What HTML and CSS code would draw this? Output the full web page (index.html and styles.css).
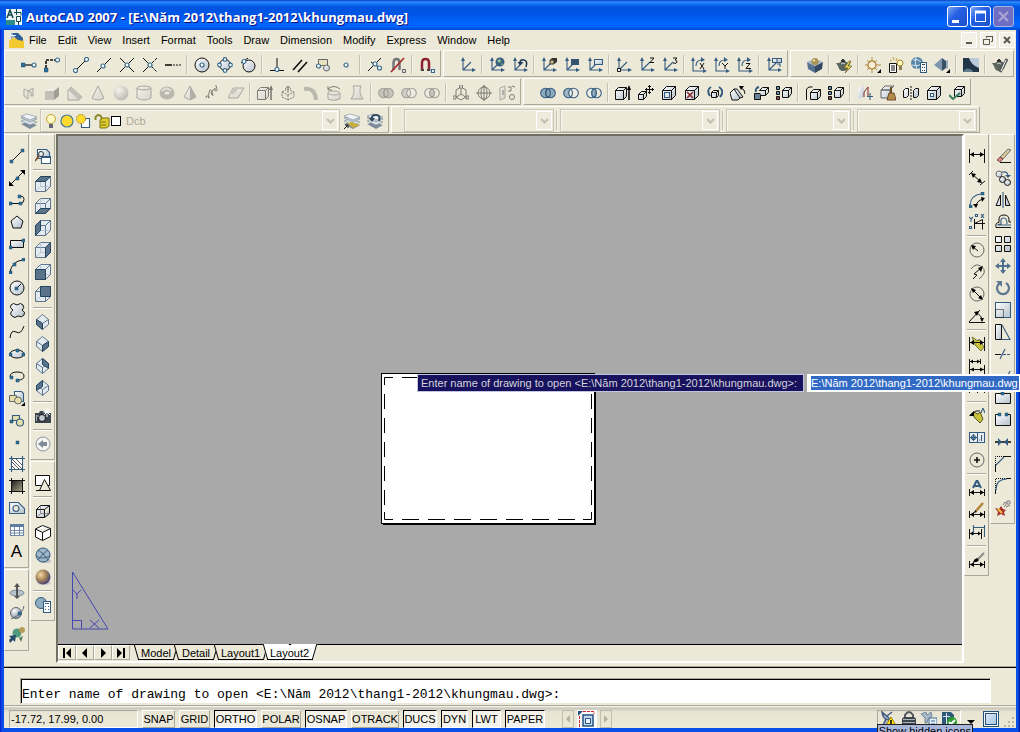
FILE: index.html
```html
<!DOCTYPE html>
<html lang="en">
<head>
  <meta charset="UTF-8">
  <title>AutoCAD 2007</title>
  <link rel="stylesheet" href="styles.css">
</head>
<body>
<svg class="sprite" aria-hidden="true">
  <defs>
    <linearGradient id="sheen" x1="0" y1="0" x2="1" y2="1"><stop offset="0" stop-color="#fff"/><stop offset="1" stop-color="#b4c0cb"/></linearGradient>
    <linearGradient id="dark" x1="0" y1="0" x2="1" y2="1"><stop offset="0" stop-color="#222"/><stop offset="1" stop-color="#a8a184"/></linearGradient>
    <radialGradient id="ball" cx=".35" cy=".3" r=".75"><stop offset="0" stop-color="#fff"/><stop offset="1" stop-color="#7d8c99"/></radialGradient>
    <radialGradient id="gold" cx=".35" cy=".35" r=".7"><stop offset="0" stop-color="#f3d9a8"/><stop offset=".5" stop-color="#a98758"/><stop offset="1" stop-color="#453f78"/></radialGradient>

    <!-- object snap -->
    <symbol id="s-track" viewBox="0 0 16 16"><path class="g2" d="M3 8h8"/><path class="n" d="M0 6h4v4H0z"/><circle class="c" cx="13" cy="8" r="2"/></symbol>
    <symbol id="s-from" viewBox="0 0 16 16"><path class="k2" stroke-dasharray="3 1" d="M2 11V3h10"/><path class="n" d="M0 11h4v4H0z"/><circle class="c" cx="13.500" cy="3" r="2"/></symbol>
    <symbol id="s-end" viewBox="0 0 16 16"><path class="k" d="M3 13L13 3"/><circle class="c" cx="2.500" cy="13.500" r="2"/><circle class="c" cx="13.500" cy="2.500" r="2"/></symbol>
    <symbol id="s-mid" viewBox="0 0 16 16"><path class="k" d="M1 15L15 1"/><circle class="c" cx="7" cy="9" r="2"/></symbol>
    <symbol id="s-int" viewBox="0 0 16 16"><path class="k" d="M1 1l14 14M1 15L15 1"/><circle class="c" cx="8" cy="8" r="2"/></symbol>
    <symbol id="s-app" viewBox="0 0 16 16"><path class="k" d="M1 1l7 7-7 7"/><path class="k" stroke-dasharray="3 1" d="M15 1L8 8l7 7"/><circle class="c" cx="8" cy="8" r="2"/></symbol>
    <symbol id="s-ext" viewBox="0 0 16 16"><path class="k2" d="M0 8h7"/><path class="k" stroke-dasharray="2 1" d="M8 8h8"/></symbol>
    <symbol id="s-cen" viewBox="0 0 16 16"><circle class="k f" cx="8" cy="8" r="7"/><circle class="c" cx="8" cy="8" r="2"/></symbol>
    <symbol id="s-quad" viewBox="0 0 16 16"><circle class="k f" cx="8" cy="8" r="5.500"/><circle class="c" cx="8" cy="2.500" r="1.800"/><circle class="c" cx="8" cy="13.500" r="1.800"/><circle class="c" cx="2.500" cy="8" r="1.800"/><circle class="c" cx="13.500" cy="8" r="1.800"/></symbol>
    <symbol id="s-tan" viewBox="0 0 16 16"><circle class="k f" cx="9" cy="9" r="6"/><path class="k" d="M1 6l7-5"/><circle class="c" cx="4" cy="4.500" r="2"/></symbol>
    <symbol id="s-perp" viewBox="0 0 16 16"><path class="k" d="M8 1v11M1 13.500h14"/><circle class="c" cx="8" cy="12.500" r="2"/></symbol>
    <symbol id="s-par" viewBox="0 0 16 16"><path class="k2" d="M1 13L10 3M6 15l9-10"/></symbol>
    <symbol id="s-ins" viewBox="0 0 16 16"><path class="g" style="fill:#e8e2bd" d="M3.500 2.500h9v6h-9z"/><circle class="g f" cx="11.500" cy="11" r="3"/><circle class="c" cx="3.500" cy="9" r="2"/></symbol>
    <symbol id="s-node" viewBox="0 0 16 16"><circle class="c" cx="8" cy="8" r="2"/></symbol>
    <symbol id="s-near" viewBox="0 0 16 16"><path class="k" d="M1 14L14 1M4 5l9 6"/><circle class="c" cx="8" cy="7" r="2"/><circle class="c" cx="12.500" cy="11" r="2"/></symbol>
    <symbol id="s-none" viewBox="0 0 16 16"><path d="M3.500 13V6q0-4 3-4t3 4v7" fill="none" stroke="#777" stroke-width="2.500"/><path d="M1 15L14 1" stroke="#a32c2c" stroke-width="1.800"/><path class="g f" d="M12.500 12.500h3v3h-3z"/></symbol>
    <symbol id="s-magnet" viewBox="0 0 16 16"><path d="M3 14V6q0-4 3.500-4T10 6v8" fill="none" stroke="#8b2335" stroke-width="2.500"/><path d="M2 13h3M8 13h3" stroke="#444" stroke-width="2"/><path class="c" d="M12.500 12.500h3v3h-3z"/></symbol>

    <!-- ucs -->
    <symbol id="u" viewBox="0 0 16 16"><path class="b" d="M3 2v11h11M3 13l8-8"/><path d="M3 0L1 4h4zM16 13l-4-2v4z" fill="#345c80"/></symbol>
    <symbol id="u-world" viewBox="0 0 16 16"><use href="#u"/><circle cx="11" cy="5" r="4.500" fill="#37617f"/><path d="M8 4q2-3 4-1l-1 3zM12 6l2 1-1 2z" fill="#9bc49a"/></symbol>
    <symbol id="u-prev" viewBox="0 0 16 16"><use href="#u"/><path d="M14 10q2-6-2-7t-4 3" fill="none" stroke="#253b53" stroke-width="1.600"/><path d="M5.500 5h5L8 8.500z" fill="#253b53"/></symbol>
    <symbol id="u-face" viewBox="0 0 16 16"><use href="#u"/><path d="M9 3h4v4H9z" fill="#c9bd8a" stroke="#111" stroke-width=".8"/><path d="M9 3l2-2h5l-3 2zM16 1v4l-3 2V3z" fill="#333"/></symbol>
    <symbol id="u-obj" viewBox="0 0 16 16"><use href="#u"/><path d="M7 2h8v6H7z" fill="#33536f"/></symbol>
    <symbol id="u-view" viewBox="0 0 16 16"><use href="#u"/><path class="b f" d="M7.500 2.500h8v5h-8z"/></symbol>
    <symbol id="u-org" viewBox="0 0 16 16"><use href="#u"/><path class="k" style="fill:#fff" d="M1.500 11.500h3v3h-3z"/></symbol>
    <symbol id="u-z" viewBox="0 0 16 16"><use href="#u"/><path class="k" d="M11 1h4l-4 4.500h4"/></symbol>
    <symbol id="u-3" viewBox="0 0 16 16"><use href="#u"/><path class="k" d="M11 1h4l-2 2q2 0 2 2t-4 1"/></symbol>
    <symbol id="u-rot" viewBox="0 0 16 16"><path class="b" d="M2 2v12h12M5 9q0-6 6-6"/><path d="M2 0L0 4h4zM16 14l-4-2v4zM14 3l-4-3v5z" fill="#345c80"/></symbol>
    <symbol id="u-rx" viewBox="0 0 16 16"><use href="#u-rot"/><path class="k" d="M9 6l4 6M13 6l-4 6"/></symbol>
    <symbol id="u-ry" viewBox="0 0 16 16"><use href="#u-rot"/><path class="k" d="M8 6l3 3 3-3M11 9v3"/></symbol>
    <symbol id="u-rz" viewBox="0 0 16 16"><use href="#u-rot"/><path class="k" d="M9 6.500h4l-4 5h5"/></symbol>
    <symbol id="u-apply" viewBox="0 0 16 16"><use href="#u"/><path class="b f" d="M6.500 1.500h9v4h-9zM11 1v4"/><path class="b" d="M11 7h3v3"/></symbol>

    <!-- render -->
    <symbol id="r-hide" viewBox="0 0 16 16"><path d="M0 5l8 4v7l-7-4z" fill="#567291"/><path d="M16 5l-8 4v7l7-4z" fill="#33475f"/><path d="M0 5l8-3 8 3-8 4z" fill="#9fb3c6"/><circle cx="8" cy="4.500" r="3.500" fill="#a8924e"/><circle cx="7" cy="3.500" r="1.200" fill="#e8d8a0"/></symbol>
    <symbol id="r-pot" viewBox="0 0 16 16"><path d="M3 6q5-4 9 0l3-1-2 4q-1 5-6 5-4 0-5-5L0 6z" fill="#59675f"/><path d="M5 4h4M7 2v2" stroke="#333" stroke-width="2"/><path d="M5 7q2-2 4 0" stroke="#cfd8d0" fill="none"/></symbol>
    <symbol id="r-flash" viewBox="0 0 16 16"><use href="#r-pot"/><path d="M13 4l-5 7h4l-3 5 7-7h-4l3-5z" fill="#e9d35c" stroke="#534a13" stroke-width=".6"/></symbol>
    <symbol id="r-set" viewBox="0 0 16 16"><use href="#r-pot"/><path d="M15 2L8 15" stroke="#555" stroke-width="3"/><path d="M14 3L9 14" stroke="#fff"/></symbol>
    <symbol id="r-light" viewBox="0 0 16 16"><circle cx="7" cy="8" r="4" fill="#f6efd6" stroke="#b68d45" stroke-width="1.500"/><path d="M7 0v4M7 12v4M0 8h3M11 8h5M2 3l3 3M12 3L9 6M2 13l3-3M12 13l-3-3" stroke="#b68d45"/><path d="M16 12v4h-4z"/></symbol>
    <symbol id="r-lights" viewBox="0 0 16 16"><path class="k" style="fill:#fff" d="M1.500 6.500h7v9h-7z"/><path class="k" d="M3 9h4M3 11h4M3 13h4"/><path d="M2 3l2 1M5 0l1 3M9 1L8 4" stroke="#caa43b"/><circle cx="12" cy="6" r="3" fill="#fff6b6" stroke="#a28a3a"/><path d="M11 9h3v4h-3z" fill="#8b8153"/></symbol>
    <symbol id="r-mat" viewBox="0 0 16 16"><circle cx="6" cy="6" r="6" fill="#5685a8"/><path d="M2 3q4-2 8 2M1 8q5 2 10-1M5 0q-2 6 1 12" stroke="#d7e7ef" fill="none"/><path class="b" style="fill:#fff" d="M9.500 5.500h6v10h-6z"/><path d="M11 7.500h3M11 10.500h1M13 10.500h1M11 13.500h1M13 13.500h1" stroke="#345"/></symbol>
    <symbol id="r-map" viewBox="0 0 16 16"><path d="M8 1v13L0 8z" fill="#7d95ad"/><path d="M8 1l4 3v7l-4 3z" fill="#395069"/><path d="M12 4l2-1v9l-2-1z" fill="#9ab"/><path d="M16 12v4h-4z"/></symbol>
    <symbol id="r-env" viewBox="0 0 16 16"><path d="M0 1h16v14H0z" fill="#b9cbd8"/><path d="M0 1h6q2 7 10 10v4H0z" fill="#223547"/><path d="M0 15q3-6 9-2l1 2z" fill="#607a90"/></symbol>

    <!-- solids -->
    <symbol id="box" viewBox="0 0 16 16"><path class="k f" d="M1.500 5.500h9v9h-9zM1.500 5.500l4-4h9l-4 4zM14.500 1.500v9l-4 4v-9z"/></symbol>
    <symbol id="o-poly" viewBox="0 0 16 16"><path class="g f" d="M3 4l4 2v8l-4-3zM7 6l5-3v8h-2V7z"/></symbol>
    <symbol id="o-box" viewBox="0 0 16 16"><path d="M1 6h9v9H1z" fill="#999"/><path d="M1 6l5-4h9l-5 4z" fill="#eee"/><path d="M10 6l5-4v9l-5 4z" fill="#555"/></symbol>
    <symbol id="o-wedge" viewBox="0 0 16 16"><path class="g f" d="M1 5l3-3 11 10-3 3H1z"/><path d="M1 5l3-3 11 10-3 3z" fill="#999"/></symbol>
    <symbol id="o-cone" viewBox="0 0 16 16"><path class="g f" d="M8 1l6 12q-6 4-12 0z"/></symbol>
    <symbol id="o-ball" viewBox="0 0 16 16"><circle cx="8" cy="8" r="7.500" fill="url(#ball)"/></symbol>
    <symbol id="o-cyl" viewBox="0 0 16 16"><path class="g f" d="M1 3v10q7 4 14 0V3z"/><ellipse class="g f" cx="8" cy="3" rx="7" ry="2"/></symbol>
    <symbol id="o-tor" viewBox="0 0 16 16"><ellipse cx="8" cy="8" rx="5" ry="4" fill="none" stroke="#888" stroke-width="5"/><path d="M3 6q5-5 9 0" stroke="#ddd" fill="none" stroke-width="2"/></symbol>
    <symbol id="o-pyr" viewBox="0 0 16 16"><path class="g f" d="M8 1l6 11-6 3-6-3z"/><path d="M8 1l6 11-6 3z" fill="#777"/></symbol>
    <symbol id="o-helix" viewBox="0 0 16 16"><path class="k" d="M1 13q0-3 2-2t1 2 0-5 3-1 0 3 1-5 2-1 1 2 0-5 5-2"/></symbol>
    <symbol id="o-plane" viewBox="0 0 16 16"><path class="g f" d="M5 3h11l-6 10H0z"/><path d="M5 3h6L6 9H2z" fill="#aaa"/></symbol>
    <symbol id="e-ext" viewBox="0 0 16 16"><path class="k f" d="M.5 5.500h8v9h-8zM.5 5.500l3-3h8l-3 3zM11.500 2.500v9l-3 3"/><path class="k2" d="M14 15V3"/><path d="M14 0l-2 5h4z"/></symbol>
    <symbol id="o-press" viewBox="0 0 16 16"><path class="k" stroke-dasharray="2 1" d="M2 7l6-3 6 3v5l-6 3-6-3zM2 7l6 3 6-3M8 10v5"/><path class="k" d="M8 8V1M5 4l3-3 3 3"/></symbol>
    <symbol id="o-sweep" viewBox="0 0 16 16"><path d="M1 4q11-2 12 11" fill="none" stroke="#888" stroke-width="4"/></symbol>
    <symbol id="o-rev" viewBox="0 0 16 16"><path class="g f" d="M2 8v6q6 3 12 0V8z"/><ellipse class="g f" cx="8" cy="8" rx="6" ry="2"/><path class="k" d="M2 4q6-5 12 0M2 1v4h4"/></symbol>
    <symbol id="o-loft" viewBox="0 0 16 16"><path class="g f" d="M4 1h8q-3 6 2 13H2Q7 7 4 1z"/></symbol>
    <symbol id="union" viewBox="0 0 16 16"><circle class="b" style="fill:#8da8bb" cx="5.500" cy="8" r="4.800"/><circle class="b" style="fill:#8da8bb" cx="10.500" cy="8" r="4.800"/><ellipse class="b" cx="8" cy="8" rx="2.200" ry="4"/></symbol>
    <symbol id="subtract" viewBox="0 0 16 16"><circle class="b" style="fill:#9fb5c4" cx="5.500" cy="8" r="4.800"/><circle class="b" style="fill:#f0efe6" cx="10.500" cy="8" r="4.800"/><path class="b" d="M8 4q3 4 0 8"/></symbol>
    <symbol id="intersect" viewBox="0 0 16 16"><circle class="b" style="fill:#f0efe6" cx="5.500" cy="8" r="4.800"/><circle class="b" cx="10.500" cy="8" r="4.800"/><ellipse class="b" style="fill:#8da8bb" cx="8" cy="8" rx="2.200" ry="4"/></symbol>
    <symbol id="o-move" viewBox="0 0 16 16"><path class="k" d="M8 1v8l-6 4M8 9l6 4M3 5l5-3 5 3v7l-5 3-5-3z"/><path class="k f" d="M0 11h3v3H0zM13 11h3v3h-3zM6.500 0h3v3h-3z"/></symbol>
    <symbol id="o-orbit" viewBox="0 0 16 16"><circle class="k" cx="8" cy="8" r="6"/><ellipse class="k" cx="8" cy="8" rx="3" ry="7"/><path class="k" d="M0 8h16M8 0v16"/></symbol>
    <symbol id="o-align" viewBox="0 0 16 16"><path class="g f" d="M1 3l5-2v12l-5 2z"/><path class="k" d="M9 2h3v4M9 6h3M13 1l3 1M4 5v5"/><circle class="k" cx="13" cy="12" r="2.500"/></symbol>

    <!-- solid editing -->
    <symbol id="e-move" viewBox="0 0 16 16"><path class="k f" d="M.5 9.500h5v5h-5zM.5 9.500l3-3h5l-3 3zM8.500 6.500v5l-3 3"/><path class="k" d="M11.500 0v9M7 4.500h9M10 1.500h3M10 7.500h3M8.500 3v3M14.500 3v3"/></symbol>
    <symbol id="e-offset" viewBox="0 0 16 16"><use href="#box"/><path class="b" style="fill:#dfe7ed" d="M3.500 7.500h5v5h-5z"/></symbol>
    <symbol id="e-del" viewBox="0 0 16 16"><use href="#box"/><path d="M3 7l6 6M9 7l-6 6" stroke="#8d2a2d" stroke-width="1.600"/></symbol>
    <symbol id="e-rot" viewBox="0 0 16 16"><path class="k f" d="M4.500 7.500h5v5h-5zM4.500 7.500l2-2h5l-2 2zM11.500 5.500v5l-2 2"/><path class="b" d="M3 11Q-1 5 4 2M13 12q5-6-1-10" style="stroke-width:2"/></symbol>
    <symbol id="e-taper" viewBox="0 0 16 16"><path class="k f" d="M0 8l4-4 6 9-2 2H2zM4 4h3l6 8-3 1"/><path class="k" d="M15 9q0-5-4-6"/><path d="M9 1h5l-3 4z"/></symbol>
    <symbol id="e-color" viewBox="0 0 16 16"><path class="k" style="fill:#6b8499" d="M1.500 8.500h6v6h-6z"/><path class="k f" d="M6.500 5.500l3-3h6l-3 3zM6.500 5.500h6v5H8M15.500 2.500v5l-3 3"/><path class="b" style="stroke-width:2" d="M3 7q-1-4 3-5"/></symbol>
    <symbol id="e-copy" viewBox="0 0 16 16"><path class="k f" d="M6.500 5.500h6v7h-6zM6.500 5.500l3-3h6l-3 3zM15.500 2.500v6l-3 4"/><path class="k" style="fill:#6f9ab8" d="M.5 1.500h3v3h-3zM.5 6.500h3v3h-3z"/><path class="k" style="fill:#a5474a" d="M.5 11.500h3v3h-3z"/></symbol>
    <symbol id="e-cedge" viewBox="0 0 16 16"><path class="k f" d="M5.500 7.500h7v7h-7zM5.500 7.500l3-3h7l-3 3zM15.500 4.500v7l-3 3"/><path class="k" d="M1.500 15V4q2-3 6-2"/></symbol>
    <symbol id="e-imp" viewBox="0 0 16 16"><path class="f" d="M1 3l6-2v11l-6 2z"/><path class="k" style="stroke:#7d2a2d" d="M7 12V7l4-5v9"/><path class="b" d="M13 8v7M10 11.500h6"/></symbol>
    <symbol id="e-clean" viewBox="0 0 16 16"><path class="g f" d="M1 5h9v8H1zM1 5l4-4h9l-4 4z"/><path d="M11 2v6" stroke="#6b4a22" stroke-width="2"/><path d="M9 8h5l2 7H7z" fill="#b58a4a" stroke="#6b4a22"/></symbol>
    <symbol id="e-sep" viewBox="0 0 16 16"><path class="k f" d="M.5 5.500l2-2h3v7l-2 2h-3zM10.500 5.500l2-2h3v7l-2 2h-3z"/><path class="k" stroke-dasharray="2 1" d="M8 1v14"/></symbol>
    <symbol id="e-shell" viewBox="0 0 16 16"><use href="#box"/><path class="b" style="fill:#fff" d="M4.500 8.500h3v3h-3z"/></symbol>
    <symbol id="e-check" viewBox="0 0 16 16"><path class="k f" d="M5.500 4.500h7v7h-7zM5.500 4.500l3-3h7l-3 3zM15.500 1.500v7l-3 3"/><path d="M0 10l4 4 7-6" fill="none" stroke="#3c7a61" stroke-width="2"/></symbol>

    <!-- layers -->
    <symbol id="layers" viewBox="0 0 16 16"><path d="M0 11l6-2 10 3-7 4z" fill="#7c8b9a"/><path d="M0 8l6-2 10 3-7 3z" fill="#dde4ea" stroke="#7c8b9a" stroke-width=".6"/><path d="M0 5l6-2 10 3-7 3z" fill="#c3cdd6" stroke="#7c8b9a" stroke-width=".6"/><path d="M0 3l6-2 10 3-7 3z" fill="#f0f3f6" stroke="#7c8b9a" stroke-width=".6"/></symbol>
    <symbol id="l-cur" viewBox="0 0 16 16"><use href="#layers"/><path d="M3 10l5-1 8 3-7 3z" fill="#c9ad3e"/><path class="k" d="M0 16l4-4M1 12h3v3"/></symbol>
    <symbol id="l-prev" viewBox="0 0 16 16"><use href="#layers"/><path d="M12 8q2-6-3-6T5 6" fill="none" stroke="#33485e" stroke-width="2"/><path d="M2 5h6L5 9z" fill="#33485e"/></symbol>
    <symbol id="bulb" viewBox="0 0 16 16"><circle cx="8" cy="6" r="4.500" fill="#fffac4" stroke="#c0a22c"/><path d="M6 11h4v4H6z" fill="#667"/></symbol>
    <symbol id="sun" viewBox="0 0 16 16"><circle cx="8" cy="8" r="6" fill="#ffd92e" stroke="#417b96" stroke-width="1.200"/></symbol>
    <symbol id="vpsun" viewBox="0 0 16 16"><path class="b" style="fill:#fff" d="M6.500 5.500h8v9h-8z"/><circle cx="6" cy="6" r="4.500" fill="#ffd92e" stroke="#a68d22" stroke-dasharray="2 1"/></symbol>
    <symbol id="lock" viewBox="0 0 16 16"><path d="M1.500 7V4q3-4 6 0v4" fill="none" stroke="#8d8a2c" stroke-width="2"/><path d="M6 7l3-2h6v8l-3 2H6z" fill="#dfcd2f" stroke="#7a7217"/><path d="M7 9h5M7 12h5" stroke="#7a7217"/></symbol>

    <!-- draw -->
    <symbol id="d-line" viewBox="0 0 16 16"><path class="k" d="M2 14L14 2"/><path class="n" d="M1 12h3v3H1zM12 1h3v3h-3z"/></symbol>
    <symbol id="d-xline" viewBox="0 0 16 16"><path class="k" d="M1 15L15 1"/><path d="M0 16v-5l5 5zM16 0v5l-5-5z"/><path class="n" d="M7 7h3v3H7z"/></symbol>
    <symbol id="d-pline" viewBox="0 0 16 16"><path class="k" d="M2 11.500h9q4 0 4-4t-4-3"/><path class="n" d="M0 10h3v3H0zM10 10h3v3h-3zM9 3h3v3H9z"/></symbol>
    <symbol id="d-poly" viewBox="0 0 16 16"><path class="k f" d="M8 2l6 5-2 7H4L2 7z"/></symbol>
    <symbol id="d-rect" viewBox="0 0 16 16"><path class="k f" d="M1.500 4.500h13v7h-13z"/><path class="n" d="M0 10h3v3H0zM13 3h3v3h-3z"/></symbol>
    <symbol id="d-arc" viewBox="0 0 16 16"><path class="k" d="M1 14Q3 3 14 2"/><path class="n" d="M0 13h3v3H0zM4 5h3v3H4zM13 0h3v3h-3z"/></symbol>
    <symbol id="d-circ" viewBox="0 0 16 16"><circle class="k f" cx="8" cy="8" r="7"/><path class="k" d="M8 8l4-4"/><path class="n" d="M6 7h3v3H6z"/></symbol>
    <symbol id="d-cloud" viewBox="0 0 16 16"><path class="k f" d="M4 8Q0 6 2 3t6 0q4-3 6 0t-1 5q4 2 2 5t-6 1q-3 3-6 0t1-6z"/></symbol>
    <symbol id="d-spl" viewBox="0 0 16 16"><path class="k" d="M1 14Q2 5 7 8t8-6"/></symbol>
    <symbol id="d-ell" viewBox="0 0 16 16"><ellipse class="k f" cx="8" cy="8" rx="7" ry="4"/><path class="n" d="M0 7h3v3H0zM13 7h3v3h-3zM7 3h3v3H7z"/></symbol>
    <symbol id="d-earc" viewBox="0 0 16 16"><path class="k" d="M1 9q0-5 7-5t7 4-6 4"/><path class="n" d="M1 8h3v3H1zM7 11h3v3H7z"/></symbol>
    <symbol id="d-block" viewBox="0 0 16 16"><path class="b f" d="M5.500 1.500h7l2 2v8h-9z"/><path class="g" style="fill:#e4dfac" d="M.5 5.500h7v6h-7z"/><circle class="g" style="fill:#e4dfac" cx="9" cy="10.500" r="3.500"/></symbol>
    <symbol id="d-insert" viewBox="0 0 16 16"><use href="#d-block"/><path d="M16 12v4h-4z"/></symbol>
    <symbol id="d-make" viewBox="0 0 16 16"><path class="b" style="fill:#e4dfac" d="M3.500 3.500h7v5h-7z"/><circle class="b" style="fill:#e4dfac" cx="11" cy="10.500" r="3.500"/><path class="n" d="M1 8h3v3H1z"/></symbol>
    <symbol id="d-pt" viewBox="0 0 16 16"><path class="n" d="M7 7h3v3H7z"/></symbol>
    <symbol id="d-hatch" viewBox="0 0 16 16"><path d="M3 3h10v10H3z" fill="#fff"/><path class="k" style="stroke-width:.7" d="M3 10l3 3M3 6l7 7M3 3l10 10M7 3l6 6"/><path class="b" d="M2.500 0v16M13.500 0v16M0 2.500h16M0 13.500h16"/></symbol>
    <symbol id="d-grad" viewBox="0 0 16 16"><path d="M3 3h10v10H3z" fill="url(#dark)"/><path class="k" d="M2.500 0v16M13.500 0v16M0 2.500h16M0 13.500h16"/></symbol>
    <symbol id="d-reg" viewBox="0 0 16 16"><path class="b f" d="M.5 2.500h9l6 6v5H.5z"/><circle class="b" style="fill:#ece9d8" cx="7" cy="8.500" r="3"/></symbol>
    <symbol id="d-table" viewBox="0 0 16 16"><path class="b" style="fill:#fff;stroke:#7288a8" d="M1.500 2.500h13v11h-13z"/><path d="M1 2h14v3H1z" fill="#5c7da0"/><path style="stroke:#7288a8" d="M1 8.500h14M1 11h14M5.500 5v9M10.500 5v9"/></symbol>
    <symbol id="pan3" viewBox="0 0 16 16"><ellipse cx="8" cy="10" rx="7" ry="3" fill="#b8c2ca" stroke="#7d8c99"/><path d="M8 1v13" stroke="#555" stroke-width="2"/><path d="M8 0L5 4h6zM8 16l-3-3h6z" fill="#555"/></symbol>
    <symbol id="orb3" viewBox="0 0 16 16"><circle cx="7" cy="8" r="5.500" fill="url(#ball)" stroke="#667"/><path d="M15 1q-1 8-13 13" fill="none" stroke="#667"/><path class="n" d="M9 7h3v3H9z"/></symbol>
    <symbol id="orbc" viewBox="0 0 16 16"><circle cx="8" cy="6" r="4.500" fill="#4f9a7c"/><circle cx="13" cy="3" r="3" fill="#b59b55"/><path d="M0 9l7-1-1 7-2-2-3 3-1-3 2-2z" fill="#274a68"/><path d="M10 11l4-2-2 6z" fill="#4f7a5c"/></symbol>

    <!-- view -->
    <symbol id="v-named" viewBox="0 0 16 16"><path class="b f" d="M2.500 1.500h9l3 3v6h-12z"/><path class="b" style="fill:#fff" d="M6.500 8.500h9v7h-9z"/><path d="M6 8h10v2H6z" fill="#345c80"/><circle cx="6" cy="6" r="2.500" fill="#e8eef2" stroke="#333"/><path d="M4 8l-4 5" stroke="#7a4a22" stroke-width="1.600"/></symbol>
    <symbol id="vc" viewBox="0 0 16 16"><path class="v" d="M.5 5.500h10v10H.5zM.5 5.500l5-5h10l-5 5zM15.500.5v10l-5 5v-10z"/><path d="M5.500.5v10h10M5.500 10.500l-5 5" fill="none" stroke="#a9b7c4" stroke-width=".7"/></symbol>
    <symbol id="v-top" viewBox="0 0 16 16"><use href="#vc"/><path class="vf" d="M.5 5.500l5-5h10l-5 5z"/></symbol>
    <symbol id="v-bot" viewBox="0 0 16 16"><use href="#vc"/><path class="vf" d="M.5 15.500l5-5h10l-5 5z"/></symbol>
    <symbol id="v-left" viewBox="0 0 16 16"><use href="#vc"/><path class="vf" d="M.5 5.500l5-5v10l-5 5z"/></symbol>
    <symbol id="v-right" viewBox="0 0 16 16"><use href="#vc"/><path class="vf" d="M10.500 5.500l5-5v10l-5 5z"/></symbol>
    <symbol id="v-front" viewBox="0 0 16 16"><use href="#vc"/><path class="vf" d="M.5 5.500h10v10H.5z"/></symbol>
    <symbol id="v-back" viewBox="0 0 16 16"><use href="#vc"/><path class="vf" d="M5.500.5h10v10h-10z"/></symbol>
    <symbol id="iso" viewBox="0 0 16 16"><path class="v" d="M7.500.5l6 5v5l-6 5-6-5v-5z"/><path class="v" style="fill:none" d="M1.500 5.500l6 4 6-4M7.500 9.500v6"/></symbol>
    <symbol id="v-sw" viewBox="0 0 16 16"><use href="#iso"/><path class="vf" d="M1.500 5.500l6 4v6l-6-5z"/></symbol>
    <symbol id="v-se" viewBox="0 0 16 16"><use href="#iso"/><path class="vf" d="M13.500 5.500l-6 4v6l6-5z"/></symbol>
    <symbol id="v-ne" viewBox="0 0 16 16"><use href="#iso"/><path class="vf" d="M7.500.5l6 5v5l-6-4z"/></symbol>
    <symbol id="v-nw" viewBox="0 0 16 16"><use href="#iso"/><path class="vf" d="M7.500.5l-6 5v5l6-4z"/></symbol>
    <symbol id="v-cam" viewBox="0 0 16 16"><path d="M0 5h4l1-2h4l1 2h6v10H0z" fill="#3a444d"/><circle cx="7" cy="10" r="3.500" fill="#c3ccd3" stroke="#111"/><path d="M12 0v9M8 4h8M9 1l6 6M15 1L9 7" stroke="#f5fbff"/><path d="M1.500 7v6M3 7v2" stroke="#aab"/></symbol>
    <symbol id="v-back2" viewBox="0 0 16 16"><circle cx="8" cy="8" r="7" fill="#f4f4f0" stroke="#8b97a3"/><path d="M3 8l5-4v2h4v4H8v2z" fill="#808b98"/></symbol>
    <symbol id="vs-2d" viewBox="0 0 16 16"><path class="k" style="fill:#fff" d="M.5 .5h14v10H.5z"/><path class="k" style="fill:#ece9d8" d="M4.500 15.500l5-11 6 11zM1 15.500h4"/></symbol>
    <symbol id="vs-3w" viewBox="0 0 16 16"><path class="k f" d="M1.500 6.500h8v8h-8zM1.500 6.500l4-4h9l-5 4zM14.500 2.500v8l-5 4"/><path d="M5.500 2.500v8h9M5.500 10.500l-4 4" fill="none" stroke="#555" stroke-width=".6"/></symbol>
    <symbol id="vs-3h" viewBox="0 0 16 16"><path class="k" style="fill:#fff" d="M.5 4l7-3.500 8 3v8l-8 4-7-3.500zM.5 4l7 3.500 8-4M7.500 7.500v8"/></symbol>
    <symbol id="vs-real" viewBox="0 0 16 16"><ellipse cx="10" cy="14" rx="6" ry="2" fill="#bbb"/><circle cx="8" cy="8" r="7" fill="#9fb6c8" stroke="#345c80"/><path d="M3 3q6 3 10 10M13 3Q8 6 3 13M1 9q6 4 14 0" fill="none" stroke="#46647f"/></symbol>
    <symbol id="vs-conc" viewBox="0 0 16 16"><ellipse cx="9" cy="14" rx="7" ry="2" fill="#ccc"/><circle cx="8" cy="8" r="7.500" fill="url(#gold)"/></symbol>
    <symbol id="vs-man" viewBox="0 0 16 16"><circle cx="6" cy="6" r="5.500" fill="#8fabc0" stroke="#345c80"/><path class="b" style="fill:#fff" d="M8.500 4.500h7v11h-7z"/><path d="M10 6.500h4M10 9.500h1M13 9.500h1M10 12.500h1M13 12.500h1" stroke="#345c80"/></symbol>

    <!-- dimension -->
    <symbol id="m-lin" viewBox="0 0 16 16"><path class="k" d="M.5 1v14M15.500 1v14M1 6.500h14"/><path d="M1 6.500l4-2.500v5zM15 6.500L11 4v5z"/></symbol>
    <symbol id="m-ali" viewBox="0 0 16 16"><path class="k" d="M0 5l4-4M11 15l5-4M3 4l9 8"/><path d="M2 3l5 1-3 4zM13 13l-5-1 3-4z"/></symbol>
    <symbol id="m-arc" viewBox="0 0 16 16"><path class="b" d="M1 13Q2 3 12 2"/><path class="k" d="M7 15q0-6 7-8"/><path d="M16 6l-4-1 1 5zM7 16l-3-4h5z"/><path class="n" d="M0 13h3v3H0zM12 0h3v3h-3z"/></symbol>
    <symbol id="m-ord" viewBox="0 0 16 16"><path class="k" d="M5.500 5v10M5 9.500h11M5.500 9.500l4-2 4-2v10"/><path class="b" d="M0 3l2 2 2-2M2 5v3M.5 12.500h2v2h-2zM6.500.5h2v2h-2zM12 0l3 4M15 0l-3 4"/></symbol>
    <symbol id="m-rad" viewBox="0 0 16 16"><circle class="g" cx="8" cy="8" r="7"/><path class="k" d="M3 4l6 5"/><path d="M2 3l5 1-3 4z"/></symbol>
    <symbol id="m-jog" viewBox="0 0 16 16"><path class="g" d="M2 5q5-7 11-2t-3 12"/><path class="k" d="M4 15l4-4-3-1 7-6"/><path d="M14 2l-2 6-3-4z"/></symbol>
    <symbol id="m-dia" viewBox="0 0 16 16"><circle class="g" cx="8" cy="8" r="7"/><path class="k" d="M4 4l8 8"/><path d="M2 2l5 2-3 3zM14 14l-2-5-3 3z"/></symbol>
    <symbol id="m-ang" viewBox="0 0 16 16"><path class="k" d="M0 14.500h16M0 14L11 2M7 5q6 2 6 8"/><path d="M5 4l5-1-2 5zM13 14l-2-4h4z"/></symbol>
    <symbol id="m-quick" viewBox="0 0 16 16"><path d="M3 1l6 4 1-2 5 8-3 4-6-6z" fill="#c9c13c" stroke="#77773a"/><use href="#m-lin"/></symbol>
    <symbol id="m-base" viewBox="0 0 16 16"><path class="k" d="M.5 1v15M15.500 7v9M11.500 1v5M1 3.500h10M1 11.500h14"/><path d="M1 11.500l4-2v4zM15 11.500l-4-2v4zM1 3.500l3-2v4zM11 3.500l-3-2v4z"/></symbol>
    <symbol id="m-cont" viewBox="0 0 16 16"><path class="k" d="M.5 4v9M8.500 4v9M15.500 4v9M1 6.500h14"/></symbol>
    <symbol id="m-lead" viewBox="0 0 16 16"><path d="M4 4l5 2 2-2 3 7-3 4-6-6z" fill="#c9c13c" stroke="#555522"/><path class="k" d="M1 7l6-4h4"/><path d="M0 8l5-5v5z"/><path class="b" d="M12 5l2-5 2 5"/></symbol>
    <symbol id="m-tol" viewBox="0 0 16 16"><path class="b" style="fill:#eef1f2" d="M.5 2.500h15v10H.5zM8.500 3v10"/><circle class="b" cx="4.500" cy="7.500" r="2"/><path class="b" d="M4.500 4v7M1 7.500h7M12.500 5v6M10 10h1"/></symbol>
    <symbol id="m-cen" viewBox="0 0 16 16"><circle class="g" cx="8" cy="8" r="7"/><path class="k2" d="M8 5v6M5 8h6"/></symbol>
    <symbol id="m-dim" viewBox="0 0 16 16"><path class="k" d="M.5 9v7M15.500 9v7M1 12.500h14"/><path d="M1 12.500l4-2.500v5zM15 12.500l-4-2.500v5z"/></symbol>
    <symbol id="m-edit" viewBox="0 0 16 16"><use href="#m-dim"/><path class="b" style="stroke-width:2" d="M4 8l4-8 4 8M6 6h4"/></symbol>
    <symbol id="m-tedit" viewBox="0 0 16 16"><use href="#m-dim"/><path d="M7 9l7-8" stroke="#b5853a" stroke-width="2.500"/><path d="M6 8l2 2-3 1z"/></symbol>
    <symbol id="m-upd" viewBox="0 0 16 16"><path class="b" d="M4.500 1v10M15.500 1v12M4 3.500h11"/><path class="k" d="M.5 5v10M12.500 5v10M1 9.500h11"/><path d="M1 9.500l3-2v4zM12 9.500l-3-2v4z"/></symbol>
    <symbol id="m-style" viewBox="0 0 16 16"><use href="#m-dim"/><path d="M9 7l6-6" stroke="#8a8a8a" stroke-width="2"/><path d="M4 10q1-3 4-4l2 2q-2 3-6 2z"/></symbol>

    <!-- modify -->
    <symbol id="x-erase" viewBox="0 0 16 16"><path d="M5 9l8-8 3 1-8 9z" fill="#d9c79c" stroke="#555" stroke-width=".8"/><path d="M5 9l3 2-3 3-3-2z" fill="#d98b82" stroke="#633" stroke-width=".8"/><path class="k" d="M5 14.500h11"/></symbol>
    <symbol id="x-copy" viewBox="0 0 16 16"><circle class="g f" cx="4" cy="4" r="3"/><circle class="k f" cx="7.500" cy="9.500" r="3"/><circle class="k f" cx="12.500" cy="12.500" r="3"/><path class="b" d="M7 2q6-1 6 4"/><path d="M13 8l-3-3h6z" fill="#345c80"/></symbol>
    <symbol id="x-mir" viewBox="0 0 16 16"><path class="k f" d="M1 13.500L5.500 3v10.500zM15 13.500L10.500 3v10.500z"/><path class="b" d="M8 0v16"/></symbol>
    <symbol id="x-off" viewBox="0 0 16 16"><path class="k" d="M16 13.500H1q-1-5 3-5V5q0-4 5-4 5 0 5 5v2h2"/><path class="b" d="M16 11H3q0-1 3-1V6q0-2 3-2 3 0 3 6"/></symbol>
    <symbol id="x-arr" viewBox="0 0 16 16"><path class="k f" d="M.5.5h6v6h-6zM9.500.5h6v6h-6zM.5 9.500h6v6h-6zM9.500 9.500h6v6h-6z"/></symbol>
    <symbol id="x-move" viewBox="0 0 16 16"><path d="M8 0l3 4H9v3h3V5l4 3-4 3V9H9v3h2l-3 4-3-4h2V9H4v2L0 8l4-3v2h3V4H5z" fill="#50708f"/></symbol>
    <symbol id="x-rot" viewBox="0 0 16 16"><path d="M11 3a6 6 0 1 1-6 0" fill="none" stroke="#5f7891" stroke-width="2.200"/><path d="M1 1h6v6z" fill="#5f7891"/></symbol>
    <symbol id="x-scale" viewBox="0 0 16 16"><path class="b f" d="M.5.5h15v15H.5z"/><path class="k" stroke-dasharray="1 1" d="M.5 7.500h8v8h-8z"/></symbol>
    <symbol id="x-str" viewBox="0 0 16 16"><path class="k f" d="M.5.5h6v15h-6z"/><path class="b" d="M7 1l8 14.500H7"/></symbol>
    <symbol id="x-trim" viewBox="0 0 16 16"><path class="k" d="M0 8.500h6"/><path class="b" d="M5 13l5-10"/><path class="b" stroke-dasharray="3 1" d="M8 8.500h8"/></symbol>
    <symbol id="x-ext" viewBox="0 0 16 16"><path class="b" d="M10 13l5-10M0 8.500h12"/></symbol>
    <symbol id="x-brk" viewBox="0 0 16 16"><path class="k f" d="M.5 3.500h15v10H.5z"/><path class="n" d="M6 2h3v3H6z"/></symbol>
    <symbol id="x-brk2" viewBox="0 0 16 16"><path class="f" d="M1 3h14v10H1z"/><path class="k" d="M4 2.500H.5v11h15v-11H12"/><path class="n" d="M3 1h3v3H3zM10 1h3v3h-3z"/></symbol>
    <symbol id="x-join" viewBox="0 0 16 16"><path class="k2" d="M0 8h16"/><path d="M7 8L3 4v8zM9 8l4-4v8z" fill="#345c80"/></symbol>
    <symbol id="x-cham" viewBox="0 0 16 16"><path class="k" stroke-dasharray="1 1" d="M.5 9V.5H9"/><path class="k" d="M.5 9v7M9 .5h7"/><path class="b" d="M1 9l8-8"/></symbol>
    <symbol id="x-fil" viewBox="0 0 16 16"><path class="k" stroke-dasharray="1 1" d="M.5 10V.5H10"/><path class="k" d="M.5 11v5M11 .5h5"/><path class="b" d="M1 12Q1 1 12 1"/></symbol>
    <symbol id="x-expl" viewBox="0 0 16 16"><path d="M0 8l4 1 2-3 2 3 3 1-2 2 1 4-4-2-4 2 1-4z" fill="#a6302c"/><path d="M3 9l4 4" stroke="#f5c542" stroke-width="2"/><path d="M9 7l4-5M10 3l4-2M11 7l4-2M8 5l2-3" stroke="#777"/><path d="M12 1h3v3h-3z" fill="#ddd" stroke="#888"/></symbol>
  </defs>
</svg>

<div class="window">
  <header class="titlebar">
    <svg class="app-icon" viewBox="0 0 16 16"><path d="M0 0h16v16H0z" fill="#eef4f4"/><path d="M1 9l3-8 3 8M2 6h4" stroke="#11484c" stroke-width="1.500" fill="none"/><path d="M10.500 0v6M8 3.500h7v3M12.500 13v3" stroke="#11484c" fill="none"/><path d="M0 11h9v5H0z" fill="#2c8c8c"/><path d="M10.500 7.500h4v5h-4z" fill="#fff" stroke="#11484c"/></svg>
    <h1>AutoCAD 2007 - [E:\Năm 2012\thang1-2012\khungmau.dwg]</h1>
    <div class="window-buttons">
      <button aria-label="Minimize"><svg viewBox="0 0 19 19"><path d="M4 13h7v3H4z" fill="#fff"/></svg></button>
      <button aria-label="Maximize"><svg viewBox="0 0 19 19"><path d="M4.500 4.500h10v10h-10z" fill="none" stroke="#fff"/><path d="M4 5h11" stroke="#fff" stroke-width="3"/></svg></button>
      <button aria-label="Close" class="close" disabled><svg viewBox="0 0 19 19"><path d="M5 5l9 9M14 5l-9 9" stroke="#a9a6d6" stroke-width="2"/></svg></button>
    </div>
  </header>

  <nav class="menubar">
    <svg class="doc-icon" viewBox="0 0 16 16"><path d="M3 1h7l5 5v9H3z" fill="#2f5f93"/><path d="M1 9l5-4 4 3 6 1v7H1z" fill="#f4c82f"/><path d="M4 0v7M0 3.500h8M1 1l6 5" stroke="#e8f2fb"/></svg>
    <button>File</button><button>Edit</button><button>View</button><button>Insert</button><button>Format</button><button>Tools</button><button>Draw</button><button>Dimension</button><button>Modify</button><button>Express</button><button>Window</button><button>Help</button>
    <div class="doc-buttons">
      <button aria-label="Minimize drawing"><svg viewBox="0 0 14 14"><path d="M4 10h6" stroke="#5a5a52" stroke-width="2"/></svg></button>
      <button aria-label="Restore drawing"><svg viewBox="0 0 14 14"><path d="M5.500 5V3.500h6v5H10M5 3.500h7M2.500 6.500h6v5h-6zM2 6.500h7" fill="none" stroke="#5a5a52"/></svg></button>
      <button aria-label="Close drawing"><svg viewBox="0 0 14 14"><path d="M4 4l6 6M10 4l-6 6" stroke="#5a5a52" stroke-width="2"/></svg></button>
    </div>
  </nav>

  <div class="toolbars">
    <div class="toolbar-row">
      <div class="toolbar">
        <button aria-label="Temporary track point"><svg><use href="#s-track"/></svg></button>
        <button aria-label="Snap from"><svg><use href="#s-from"/></svg></button><i></i>
        <button aria-label="Endpoint"><svg><use href="#s-end"/></svg></button>
        <button aria-label="Midpoint"><svg><use href="#s-mid"/></svg></button>
        <button aria-label="Intersection"><svg><use href="#s-int"/></svg></button>
        <button aria-label="Apparent intersection"><svg><use href="#s-app"/></svg></button>
        <button aria-label="Extension"><svg><use href="#s-ext"/></svg></button><i></i>
        <button aria-label="Center"><svg><use href="#s-cen"/></svg></button>
        <button aria-label="Quadrant"><svg><use href="#s-quad"/></svg></button>
        <button aria-label="Tangent"><svg><use href="#s-tan"/></svg></button><i></i>
        <button aria-label="Perpendicular"><svg><use href="#s-perp"/></svg></button>
        <button aria-label="Parallel"><svg><use href="#s-par"/></svg></button>
        <button aria-label="Insert point"><svg><use href="#s-ins"/></svg></button>
        <button aria-label="Node"><svg><use href="#s-node"/></svg></button><i></i>
        <button aria-label="Nearest"><svg><use href="#s-near"/></svg></button>
        <button aria-label="No snap"><svg><use href="#s-none"/></svg></button><i></i>
        <button aria-label="Snap settings"><svg><use href="#s-magnet"/></svg></button>
      </div>
      <div class="toolbar">
        <button aria-label="UCS"><svg><use href="#u"/></svg></button><i></i>
        <button aria-label="World UCS"><svg><use href="#u-world"/></svg></button>
        <button aria-label="Previous UCS"><svg><use href="#u-prev"/></svg></button><i></i>
        <button aria-label="Face UCS"><svg><use href="#u-face"/></svg></button>
        <button aria-label="Object UCS"><svg><use href="#u-obj"/></svg></button>
        <button aria-label="View UCS"><svg><use href="#u-view"/></svg></button><i></i>
        <button aria-label="Origin UCS"><svg><use href="#u-org"/></svg></button>
        <button aria-label="Z axis vector"><svg><use href="#u-z"/></svg></button>
        <button aria-label="3 point"><svg><use href="#u-3"/></svg></button><i></i>
        <button aria-label="Rotate X"><svg><use href="#u-rx"/></svg></button>
        <button aria-label="Rotate Y"><svg><use href="#u-ry"/></svg></button>
        <button aria-label="Rotate Z"><svg><use href="#u-rz"/></svg></button><i></i>
        <button aria-label="Apply UCS"><svg><use href="#u-apply"/></svg></button>
      </div>
      <div class="toolbar">
        <button aria-label="Hide"><svg><use href="#r-hide"/></svg></button><i></i>
        <button aria-label="Render"><svg><use href="#r-flash"/></svg></button><i></i>
        <button aria-label="Lights"><svg><use href="#r-light"/></svg></button>
        <button aria-label="Light list"><svg><use href="#r-lights"/></svg></button>
        <button aria-label="Materials"><svg><use href="#r-mat"/></svg></button>
        <button aria-label="Mapping"><svg><use href="#r-map"/></svg></button><i></i>
        <button aria-label="Render environment"><svg><use href="#r-env"/></svg></button><i></i>
        <button aria-label="Render settings"><svg><use href="#r-set"/></svg></button>
      </div>
    </div>

    <div class="toolbar-row">
      <div class="toolbar">
        <button disabled aria-label="Polysolid"><svg><use href="#o-poly"/></svg></button>
        <button disabled aria-label="Box"><svg><use href="#o-box"/></svg></button>
        <button disabled aria-label="Wedge"><svg><use href="#o-wedge"/></svg></button>
        <button disabled aria-label="Cone"><svg><use href="#o-cone"/></svg></button>
        <button disabled aria-label="Sphere"><svg><use href="#o-ball"/></svg></button>
        <button disabled aria-label="Cylinder"><svg><use href="#o-cyl"/></svg></button>
        <button disabled aria-label="Torus"><svg><use href="#o-tor"/></svg></button>
        <button disabled aria-label="Pyramid"><svg><use href="#o-pyr"/></svg></button>
        <button disabled aria-label="Helix"><svg><use href="#o-helix"/></svg></button>
        <button disabled aria-label="Planar surface"><svg><use href="#o-plane"/></svg></button><i></i>
        <button disabled aria-label="Extrude"><svg><use href="#e-ext"/></svg></button>
        <button disabled aria-label="Presspull"><svg><use href="#o-press"/></svg></button>
        <button disabled aria-label="Sweep"><svg><use href="#o-sweep"/></svg></button>
        <button disabled aria-label="Revolve"><svg><use href="#o-rev"/></svg></button>
        <button disabled aria-label="Loft"><svg><use href="#o-loft"/></svg></button><i></i>
        <button disabled aria-label="Union"><svg><use href="#union"/></svg></button>
        <button disabled aria-label="Subtract"><svg><use href="#subtract"/></svg></button>
        <button disabled aria-label="Intersect"><svg><use href="#intersect"/></svg></button><i></i>
        <button disabled aria-label="3D move"><svg><use href="#o-move"/></svg></button>
        <button disabled aria-label="3D rotate"><svg><use href="#o-orbit"/></svg></button>
        <button disabled aria-label="3D align"><svg><use href="#o-align"/></svg></button>
      </div>
      <div class="toolbar">
        <button aria-label="Union"><svg><use href="#union"/></svg></button>
        <button aria-label="Subtract"><svg><use href="#subtract"/></svg></button>
        <button aria-label="Intersect"><svg><use href="#intersect"/></svg></button><i></i>
        <button aria-label="Extrude faces"><svg><use href="#e-ext"/></svg></button>
        <button aria-label="Move faces"><svg><use href="#e-move"/></svg></button>
        <button aria-label="Offset faces"><svg><use href="#e-offset"/></svg></button>
        <button aria-label="Delete faces"><svg><use href="#e-del"/></svg></button>
        <button aria-label="Rotate faces"><svg><use href="#e-rot"/></svg></button>
        <button aria-label="Taper faces"><svg><use href="#e-taper"/></svg></button>
        <button aria-label="Copy faces"><svg><use href="#e-color"/></svg></button>
        <button aria-label="Color faces"><svg><use href="#e-copy"/></svg></button><i></i>
        <button aria-label="Copy edges"><svg><use href="#e-cedge"/></svg></button>
        <button aria-label="Color edges"><svg><use href="#e-copy"/></svg></button><i></i>
        <button aria-label="Imprint"><svg><use href="#e-imp"/></svg></button>
        <button aria-label="Clean"><svg><use href="#e-clean"/></svg></button>
        <button aria-label="Separate"><svg><use href="#e-sep"/></svg></button>
        <button aria-label="Shell"><svg><use href="#e-shell"/></svg></button>
        <button aria-label="Check"><svg><use href="#e-check"/></svg></button>
      </div>
    </div>

    <div class="toolbar-row">
      <div class="toolbar">
        <button aria-label="Layer properties"><svg><use href="#layers"/></svg></button>
        <div class="combo combo-layer">
          <svg><use href="#bulb"/></svg><svg><use href="#sun"/></svg><svg><use href="#vpsun"/></svg><svg class="lock"><use href="#lock"/></svg><span class="swatch"></span>
          <select disabled aria-label="Layer"><option>Dcb</option></select>
          <span class="arrow"><svg viewBox="0 0 9 6"><path d="M1 1l3.500 3.500L8 1"/></svg></span>
        </div>
        <button aria-label="Make layer current"><svg><use href="#l-cur"/></svg></button>
        <button aria-label="Layer previous"><svg><use href="#l-prev"/></svg></button>
      </div>
      <div class="toolbar">
        <div class="combo combo-color"><select disabled aria-label="Color"></select><span class="arrow"><svg viewBox="0 0 9 6"><path d="M1 1l3.500 3.500L8 1"/></svg></span></div><i></i>
        <div class="combo combo-ltype"><select disabled aria-label="Linetype"></select><span class="arrow"><svg viewBox="0 0 9 6"><path d="M1 1l3.500 3.500L8 1"/></svg></span></div><i></i>
        <div class="combo combo-weight"><select disabled aria-label="Lineweight"></select><span class="arrow"><svg viewBox="0 0 9 6"><path d="M1 1l3.500 3.500L8 1"/></svg></span></div><i></i>
        <div class="combo combo-plot"><select disabled aria-label="Plot style"></select><span class="arrow"><svg viewBox="0 0 9 6"><path d="M1 1l3.500 3.500L8 1"/></svg></span></div>
      </div>
    </div>
  </div>

  <main class="workspace">
    <div class="dock">
      <div class="toolbar vertical">
        <button aria-label="Line"><svg><use href="#d-line"/></svg></button>
        <button aria-label="Construction line"><svg><use href="#d-xline"/></svg></button>
        <button aria-label="Polyline"><svg><use href="#d-pline"/></svg></button>
        <button aria-label="Polygon"><svg><use href="#d-poly"/></svg></button>
        <button aria-label="Rectangle"><svg><use href="#d-rect"/></svg></button>
        <button aria-label="Arc"><svg><use href="#d-arc"/></svg></button>
        <button aria-label="Circle"><svg><use href="#d-circ"/></svg></button>
        <button aria-label="Revision cloud"><svg><use href="#d-cloud"/></svg></button>
        <button aria-label="Spline"><svg><use href="#d-spl"/></svg></button>
        <button aria-label="Ellipse"><svg><use href="#d-ell"/></svg></button>
        <button aria-label="Ellipse arc"><svg><use href="#d-earc"/></svg></button>
        <button aria-label="Insert block"><svg><use href="#d-insert"/></svg></button>
        <button aria-label="Make block"><svg><use href="#d-make"/></svg></button>
        <button aria-label="Point"><svg><use href="#d-pt"/></svg></button>
        <button aria-label="Hatch"><svg><use href="#d-hatch"/></svg></button>
        <button aria-label="Gradient"><svg><use href="#d-grad"/></svg></button>
        <button aria-label="Region"><svg><use href="#d-reg"/></svg></button>
        <button aria-label="Table"><svg><use href="#d-table"/></svg></button>
        <button class="mtext" aria-label="Multiline text">A</button>
      </div>
      <div class="toolbar vertical">
        <button aria-label="3D pan"><svg><use href="#pan3"/></svg></button>
        <button aria-label="Free orbit"><svg><use href="#orb3"/></svg></button>
        <button aria-label="Continuous orbit"><svg><use href="#orbc"/></svg></button>
      </div>
    </div>
    <div class="dock">
      <div class="toolbar vertical">
        <button aria-label="Named views"><svg><use href="#v-named"/></svg></button><i></i>
        <button aria-label="Top"><svg><use href="#v-top"/></svg></button>
        <button aria-label="Bottom"><svg><use href="#v-bot"/></svg></button>
        <button aria-label="Left"><svg><use href="#v-left"/></svg></button>
        <button aria-label="Right"><svg><use href="#v-right"/></svg></button>
        <button aria-label="Front"><svg><use href="#v-front"/></svg></button>
        <button aria-label="Back"><svg><use href="#v-back"/></svg></button><i></i>
        <button aria-label="SW isometric"><svg><use href="#v-sw"/></svg></button>
        <button aria-label="SE isometric"><svg><use href="#v-se"/></svg></button>
        <button aria-label="NE isometric"><svg><use href="#v-ne"/></svg></button>
        <button aria-label="NW isometric"><svg><use href="#v-nw"/></svg></button><i></i>
        <button aria-label="Create camera"><svg><use href="#v-cam"/></svg></button><i></i>
        <button aria-label="Previous view"><svg><use href="#v-back2"/></svg></button>
      </div>
      <div class="toolbar vertical">
        <button aria-label="2D wireframe"><svg><use href="#vs-2d"/></svg></button><i></i>
        <button aria-label="3D wireframe"><svg><use href="#vs-3w"/></svg></button>
        <button aria-label="3D hidden"><svg><use href="#vs-3h"/></svg></button>
        <button aria-label="Realistic"><svg><use href="#vs-real"/></svg></button>
        <button aria-label="Conceptual"><svg><use href="#vs-conc"/></svg></button><i></i>
        <button aria-label="Manage visual styles"><svg><use href="#vs-man"/></svg></button>
      </div>
    </div>

    <section class="drawing">
      <div class="canvas">
        <svg class="paper" viewBox="0 0 215 152">
          <path d="M0 0h214v2h1v150H2v-1H0z"/>
          <path d="M1 1h212v149H1z" fill="#fff"/>
          <g fill="none" stroke="#000">
            <path d="M3.500 12V4.500H12M202 4.500h8.500V12M3.500 139v7.500H12M202 146.500h8.500V139"/>
            <path stroke-dasharray="17 9" d="M21 4.500h180M21 146.500h180"/>
            <path stroke-dasharray="15 9" d="M3.500 21v117M210.500 21v117"/>
          </g>
        </svg>
        <svg class="ucs-icon" viewBox="0 0 37 59"><path d="M.5 1v57H36zM.5 49.500h9v8M1 19l4 4 4-4M5 23v5M18 49l9 8M27 49l-9 8" fill="none" stroke="#4747b0"/></svg>
        <label class="prompt" for="drawing-name">Enter name of drawing to open &lt;E:\Năm 2012\thang1-2012\khungmau.dwg&gt;:</label>
        <input class="prompt-input" id="drawing-name" value="E:\Năm 2012\thang1-2012\khungmau.dwg">
      </div>
      <div class="tabs">
        <div class="tab-nav">
          <button aria-label="First"><svg viewBox="0 0 10 10"><path d="M1 0h2v10H1zM9 0v10L4 5z"/></svg></button>
          <button aria-label="Previous"><svg viewBox="0 0 10 10"><path d="M7 0v10L2 5z"/></svg></button>
          <button aria-label="Next"><svg viewBox="0 0 10 10"><path d="M3 0v10l5-5z"/></svg></button>
          <button aria-label="Last"><svg viewBox="0 0 10 10"><path d="M1 0v10l5-5zM7 0h2v10H7z"/></svg></button>
        </div>
        <button class="tab">Model</button><button class="tab">Detail</button><button class="tab wide">Layout1</button><button class="tab wide active">Layout2</button>
      </div>
    </section>

    <div class="dock">
      <div class="toolbar vertical">
        <button aria-label="Linear"><svg><use href="#m-lin"/></svg></button>
        <button aria-label="Aligned"><svg><use href="#m-ali"/></svg></button>
        <button aria-label="Arc length"><svg><use href="#m-arc"/></svg></button>
        <button aria-label="Ordinate"><svg><use href="#m-ord"/></svg></button><i></i>
        <button aria-label="Radius"><svg><use href="#m-rad"/></svg></button>
        <button aria-label="Jogged"><svg><use href="#m-jog"/></svg></button>
        <button aria-label="Diameter"><svg><use href="#m-dia"/></svg></button>
        <button aria-label="Angular"><svg><use href="#m-ang"/></svg></button><i></i>
        <button aria-label="Quick dimension"><svg><use href="#m-quick"/></svg></button>
        <button aria-label="Baseline"><svg><use href="#m-base"/></svg></button>
        <button aria-label="Continue"><svg><use href="#m-cont"/></svg></button><i></i>
        <button aria-label="Quick leader"><svg><use href="#m-lead"/></svg></button>
        <button aria-label="Tolerance"><svg><use href="#m-tol"/></svg></button>
        <button aria-label="Center mark"><svg><use href="#m-cen"/></svg></button><i></i>
        <button aria-label="Dimension edit"><svg><use href="#m-edit"/></svg></button>
        <button aria-label="Dimension text edit"><svg><use href="#m-tedit"/></svg></button>
        <button aria-label="Dimension update"><svg><use href="#m-upd"/></svg></button><i></i>
        <button aria-label="Dimension style"><svg><use href="#m-style"/></svg></button>
      </div>
    </div>
    <div class="dock">
      <div class="toolbar vertical">
        <button aria-label="Erase"><svg><use href="#x-erase"/></svg></button>
        <button aria-label="Copy"><svg><use href="#x-copy"/></svg></button>
        <button aria-label="Mirror"><svg><use href="#x-mir"/></svg></button>
        <button aria-label="Offset"><svg><use href="#x-off"/></svg></button>
        <button aria-label="Array"><svg><use href="#x-arr"/></svg></button>
        <button aria-label="Move"><svg><use href="#x-move"/></svg></button>
        <button aria-label="Rotate"><svg><use href="#x-rot"/></svg></button>
        <button aria-label="Scale"><svg><use href="#x-scale"/></svg></button>
        <button aria-label="Stretch"><svg><use href="#x-str"/></svg></button>
        <button aria-label="Trim"><svg><use href="#x-trim"/></svg></button>
        <button aria-label="Extend"><svg><use href="#x-ext"/></svg></button>
        <button aria-label="Break at point"><svg><use href="#x-brk"/></svg></button>
        <button aria-label="Break"><svg><use href="#x-brk2"/></svg></button>
        <button aria-label="Join"><svg><use href="#x-join"/></svg></button>
        <button aria-label="Chamfer"><svg><use href="#x-cham"/></svg></button>
        <button aria-label="Fillet"><svg><use href="#x-fil"/></svg></button>
        <button aria-label="Explode"><svg><use href="#x-expl"/></svg></button>
      </div>
    </div>
  </main>

  <section class="command">
    <input aria-label="Command line" value="Enter name of drawing to open &lt;E:\Năm 2012\thang1-2012\khungmau.dwg&gt;:">
  </section>

  <footer class="statusbar">
    <output class="coords">-17.72, 17.99, 0.00</output>
    <div class="toggles">
      <button>SNAP</button><button>GRID</button><button class="on">ORTHO</button><button>POLAR</button><button class="on">OSNAP</button><button>OTRACK</button><button class="on">DUCS</button><button class="on">DYN</button><button class="on">LWT</button><button class="on">PAPER</button>
    </div>
    <div class="viewports">
      <button disabled class="step" aria-label="Previous viewport"><svg viewBox="0 0 8 8"><path d="M6 0v8L2 4z"/></svg></button>
      <button class="max-vp" aria-label="Maximize viewport"><svg viewBox="0 0 20 18"><path d="M6 1.500h11V4M2.500 6v11" fill="none" stroke="#d22" stroke-dasharray="3 1"/><path d="M1 1h5L1 6z" fill="#24507c"/><path d="M6 5h10v11H6z" fill="#c5dcf0" stroke="#24507c" stroke-width="1.500"/><path d="M8.500 8.500h5v5h-5z" fill="#eef6fc" stroke="#24507c"/></svg></button>
      <button disabled class="step" aria-label="Next viewport"><svg viewBox="0 0 8 8"><path d="M2 0v8l4-4z"/></svg></button>
    </div>
    <div class="tray">
      <svg viewBox="0 0 16 16"><path d="M1 1q1 9 9 8zM6 5l5-4M5 8l-3 6h7" fill="#a9b6cc" stroke="#43587f" stroke-width="1.500"/><path d="M10 6l6 10H4z" fill="#ffe21f" stroke="#9c8400"/><path d="M10 9v4M10 14v1" stroke="#000" stroke-width="1.500"/></svg>
      <svg viewBox="0 0 16 16"><path d="M4 7V4q4-6 8 0v3" fill="none" stroke="#555c63" stroke-width="2"/><rect x="1" y="6" width="14" height="10" rx="3" fill="#3e454c"/><path d="M2 8.500h12M2 11.500h12M3 14h10" stroke="#aab2ba"/></svg>
      <svg viewBox="0 0 16 16"><path d="M0 3l5-2 1 3 4-3 1 4-4 3-1 4H4V7z" fill="#a7b8c6" stroke="#73889b"/><path d="M8 7h8v9H8z" fill="#e6f0fa" stroke="#3d678f"/><path d="M10 10h4M10 13h4" stroke="#3d678f"/></svg>
      <svg viewBox="0 0 16 16"><path d="M1 1h9l3 3v11H1z" fill="#2e5878"/><path d="M5.500 2v12M2 5.500h7" stroke="#dbe9f3"/><circle cx="11" cy="11" r="5" fill="#2b9c2f"/><path d="M8 11l2 2 4-4" fill="none" stroke="#fff" stroke-width="2"/></svg>
    </div>
    <button class="tray-menu" aria-label="Status bar menu"><svg viewBox="0 0 8 4"><path d="M0 0h8L4 4z"/></svg></button>
    <button class="clean-screen" aria-label="Clean screen"></button>
    <svg class="grip" viewBox="0 0 12 12"><path d="M9 1h2v2H9zM5 5h2v2H5zM9 5h2v2H9zM1 9h2v2H1zM5 9h2v2H5zM9 9h2v2H9z"/></svg>
    <span class="tooltip">Show hidden icons</span>
  </footer>
</div>
</body>
</html>
```

FILE: styles.css
```css
* {
  box-sizing: border-box;
}

body {
  margin: 0;
  background: #0831d9;
  font-family: "Liberation Sans", Arial, sans-serif;
  font-size: 11px;
  color: #000;
}

button {
  margin: 0;
  padding: 0;
  border: none;
  background: none;
  font: inherit;
  color: inherit;
}

svg {
  display: block;
}

.sprite {
  position: absolute;
  width: 0;
  height: 0;
}

/* strokes shared by the icons */
.k, .k2, .g, .g2, .b { fill: none; }
.k { stroke: #111; stroke-width: 1; }
.k2 { stroke: #111; stroke-width: 1.6; }
.g { stroke: #666; stroke-width: 1; }
.g2 { stroke: #666; stroke-width: 2; }
.b { stroke: #345c80; stroke-width: 1.1; }
.f { fill: url(#sheen); }
.c { fill: #fff; stroke: #356a8e; stroke-width: 1.2; }
.n { fill: #2f7099; stroke: #234c68; stroke-width: .5; }
.v { fill: #e3eaf0; stroke: #5f768c; }
.vf { fill: #5b7389; stroke: #24455f; }

.window {
  display: flex;
  flex-direction: column;
  height: 100vh;
  overflow: hidden;
  padding: 0 4px 4px;
  background: linear-gradient(to right, #0019cf 0, #0a4fe8 2px, #0a4fe8 calc(100% - 2px), #00138c 100%);
}

/* title bar */
.titlebar {
  display: flex;
  align-items: center;
  flex: none;
  height: 30px;
  margin: 0 -4px;
  padding: 3px 6px 0;
  background: linear-gradient(#0a3fc4 0, #2b8cff 2px, #1471f4 4px, #0054e0 7px, #0055e5 14px, #0066ff 24px, #0062f8 27px, #0047d0 30px);
}

.app-icon {
  width: 16px;
  height: 16px;
}

.titlebar h1 {
  flex: 1;
  margin: 0 0 0 4px;
  font: bold 13px "Open Sans", "Noto Sans", sans-serif;
  color: #fff;
  text-shadow: 1px 1px #0f1089;
  white-space: nowrap;
}

.window-buttons {
  display: flex;
  gap: 2px;
}

.window-buttons button {
  width: 21px;
  height: 21px;
  border: 1px solid #fff;
  border-radius: 3px;
  background: linear-gradient(135deg, #7da4f5, #2560e4 40%, #1c50c8);
}

.window-buttons .close {
  border-color: #a9b4e8;
  background: #6e6fc2;
}

/* menu bar */
.menubar {
  display: flex;
  align-items: center;
  gap: 11px;
  flex: none;
  height: 20px;
  padding: 0 1px 1px 4px;
  background: #ece9d8;
}

.doc-icon {
  width: 16px;
  height: 16px;
  margin-right: -6px;
}

.doc-buttons {
  display: flex;
  gap: 3px;
  margin-left: auto;
}

.doc-buttons button {
  width: 16px;
  height: 16px;
  border: 1px solid #fff;
  background: #f3f1e6;
}

/* toolbars */
.toolbars {
  display: flex;
  flex-direction: column;
  flex: none;
  gap: 1px;
  padding-bottom: 1px;
  background: #ece9d8;
}

.toolbar-row {
  display: flex;
  gap: 2px;
}

.toolbar {
  display: flex;
  align-items: center;
  height: 27px;
  padding: 2px 2px 0 12px;
  border: 1px solid;
  border-color: #fff #aca899 #aca899 #fff;
  background: #ece9d8;
}

.toolbar button {
  display: flex;
  align-items: center;
  justify-content: center;
  flex: none;
  width: 23px;
  height: 22px;
}

.toolbar button svg {
  width: 16px;
  height: 16px;
}

.toolbar button:disabled svg {
  filter: grayscale(1);
  opacity: .5;
}

.toolbar i {
  flex: none;
  width: 2px;
  height: 19px;
  margin: 0 2px;
  border-left: 1px solid #c5c2b2;
  border-right: 1px solid #f6f4ea;
}

.toolbar.vertical {
  flex-direction: column;
  width: 25px;
  height: auto;
  padding: 10px 0 4px;
}

.toolbar.vertical + .toolbar.vertical {
  margin-top: 1px;
}

.toolbar.vertical i {
  width: 19px;
  height: 2px;
  margin: 2px 0;
  border: none;
  border-top: 1px solid #aca899;
  border-bottom: 1px solid #fff;
}

.toolbar .mtext {
  font-size: 17px;
}

.combo {
  display: flex;
  align-items: center;
  height: 23px;
  padding: 1px;
  border: 1px solid #c9c7ba;
  box-shadow: inset 1px 1px #f7f5ec;
}

.combo > svg {
  width: 16px;
  height: 16px;
}

.combo .lock {
  margin-left: 3px;
}

.combo-layer { width: 300px; padding-left: 2px; }
.combo-color { width: 150px; }
.combo-ltype { width: 160px; }
.combo-weight { width: 125px; }
.combo-plot { width: 120px; }

.swatch {
  width: 10px;
  height: 10px;
  margin-left: 1px;
  border: 1px solid #000;
  background: #fff;
}

.combo select {
  flex: 1;
  min-width: 0;
  padding: 0 5px;
  border: none;
  appearance: none;
  background: none;
  font: 11px "Liberation Sans", Arial, sans-serif;
  color: #aca899;
  opacity: 1;
}

.arrow {
  display: flex;
  align-items: center;
  justify-content: center;
  width: 16px;
  height: 19px;
  border: 1px solid #fff;
  background: #eeebdd;
}

.arrow svg {
  width: 9px;
  height: 6px;
  fill: none;
  stroke: #c2bfae;
  stroke-width: 2;
}

/* workspace */
.workspace {
  display: flex;
  flex: 1;
  min-height: 0;
  padding-bottom: 3px;
  background: #ece9d8;
}

.dock {
  flex: none;
  width: 26px;
}

.drawing {
  display: flex;
  flex-direction: column;
  flex: 1;
  min-width: 0;
  border: 2px solid;
  border-color: #716f64 #fff #fff #716f64;
}

.canvas {
  position: relative;
  flex: 1;
  background: #a9a9a9;
}

.paper {
  position: absolute;
  left: 323px;
  top: 237px;
  width: 215px;
  height: 152px;
}

.ucs-icon {
  position: absolute;
  left: 14px;
  bottom: 14px;
  width: 37px;
  height: 59px;
}

.prompt {
  position: absolute;
  left: 359px;
  top: 238px;
  width: 387px;
  height: 18px;
  padding-left: 3px;
  border: 1px solid #c0c4dc;
  background: #18125e;
  font-size: 11px;
  line-height: 16px;
  color: #d4d4dc;
  white-space: nowrap;
}

.prompt-input {
  position: absolute;
  z-index: 2;
  left: 749px;
  top: 238px;
  width: 213px;
  height: 18px;
  padding: 2px 1px 2px 4px;
  border: none;
  background: linear-gradient(#316ac5, #316ac5) content-box, #fff;
  font: 11px "Liberation Sans", Arial, sans-serif;
  color: #fff;
}

.tabs {
  display: flex;
  flex: none;
  height: 17px;
  border-top: 1px solid #000;
}

.tab-nav {
  display: flex;
  margin-right: 6px;
}

.tab-nav button {
  display: flex;
  align-items: center;
  justify-content: center;
  width: 18px;
  height: 15px;
  border: 1px solid;
  border-color: #fff #aca899 #aca899 #fff;
}

.tab-nav svg {
  width: 10px;
  height: 10px;
}

.tab {
  position: relative;
  z-index: 0;
  width: 40px;
  height: 15px;
  line-height: 14px;
}

.tab.wide {
  width: 49px;
}

/* the two slanted halves of a tab */
.tab::before,
.tab::after {
  content: "";
  position: absolute;
  z-index: -1;
  top: 0;
  bottom: 0;
  width: 50%;
  border-bottom: 1px solid #000;
  background: #ece9d8;
}

.tab::before {
  left: 0;
  border-left: 1px solid #000;
  transform: skewX(16deg);
}

.tab::after {
  right: 0;
  border-right: 1px solid #000;
  transform: skewX(-16deg);
}

.tab.active::before,
.tab.active::after {
  top: -1px;
  background: #fff;
}

/* command line */
.command {
  flex: none;
  height: 39px;
  padding: 11px 25px 2px 16px;
  border-top: 1px solid #aca899;
  box-shadow: inset 0 1px #000;
  background: #ece9d8;
}

.command input {
  display: block;
  width: 100%;
  height: 26px;
  padding: 6px 0 0 1px;
  border: 1px solid;
  border-color: #aca899 #fff #ece9d8 #aca899;
  box-shadow: inset 1px 1px #000;
  background: #fff;
  font: 13px "Liberation Mono", "Courier New", monospace;
  color: #000;
}

/* status bar */
.statusbar {
  position: relative;
  display: flex;
  align-items: center;
  flex: none;
  height: 23px;
  padding: 3px 1px 0 5px;
  border-top: 1px solid #aca899;
  background: linear-gradient(#fff 0, #c9c7b8 2px, #e8e5d4 6px, #ece9d8);
}

.coords {
  width: 129px;
  height: 18px;
  padding-left: 1px;
  border: 1px solid;
  border-color: #aca899 #fff #fff #aca899;
  line-height: 17px;
}

.toggles {
  display: grid;
  grid-template-columns: 33px 31px 43px 40px 42px 48px 34px 27px 29px 40px;
  gap: 4px;
  margin-left: 4px;
}

.toggles button {
  height: 18px;
  border: 1px solid;
  border-color: #fff #aca899 #aca899 #fff;
  white-space: nowrap;
}

.toggles .on {
  border-color: #000 #fff #fff #000;
  background: #f4f2ea;
  padding-top: 1px;
}

.viewports {
  display: flex;
  gap: 3px;
  margin-left: 17px;
}

.step {
  display: flex;
  align-items: center;
  justify-content: center;
  width: 12px;
  height: 18px;
  border: 1px solid #c2bfae;
}

.step svg {
  width: 8px;
  height: 8px;
  fill: #b5b2a2;
}

.max-vp {
  width: 20px;
  height: 18px;
  background: #fff;
}

.tray {
  display: flex;
  align-items: center;
  gap: 4px;
  width: 84px;
  height: 18px;
  margin-left: auto;
  padding-left: 3px;
  border: 1px solid;
  border-color: #aca899 #fff #fff #aca899;
}

.tray svg {
  width: 16px;
  height: 16px;
}

.tray-menu {
  margin: 6px 8px 0 6px;
}

.tray-menu svg {
  width: 8px;
  height: 4px;
}

.clean-screen {
  width: 16px;
  height: 16px;
  margin-right: 4px;
  border: 1px solid #24507c;
  background: linear-gradient(135deg, #e4f0fa, #9dbfdd);
  box-shadow: inset 0 0 0 1px #fff, inset 0 0 0 2px #24507c;
}

.grip {
  width: 12px;
  height: 12px;
  margin-top: 6px;
  fill: #b8b5a4;
}

.tooltip {
  position: absolute;
  z-index: 3;
  right: 43px;
  top: 18px;
  height: 20px;
  padding: 0 1px;
  border: 1px solid #222;
  background: #a9b6dc;
  line-height: 12px;
  white-space: nowrap;
}
```
